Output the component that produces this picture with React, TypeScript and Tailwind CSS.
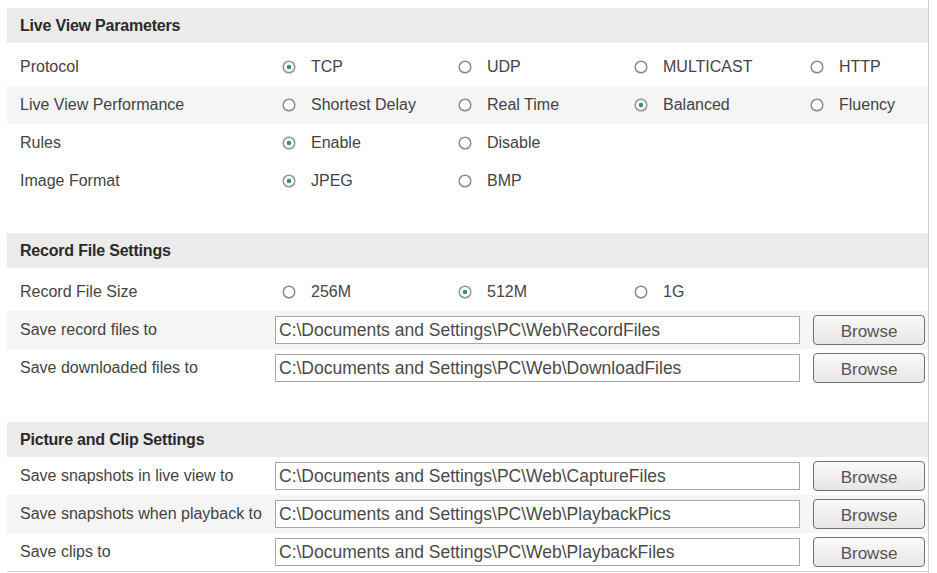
import React from 'react';

type Opt = { label: string; checked?: boolean };

function Radio({ checked }: { checked?: boolean }) {
  return (
    <svg width="14" height="14" viewBox="0 0 14 14" className="shrink-0">
      <circle cx="7" cy="7" r="5.8" fill="#fff" stroke={checked ? '#8a9a92' : '#8c8c8c'} strokeWidth="1.5" />
      {checked && <circle cx="7" cy="7" r="2.3" fill="#3f8f66" />}
    </svg>
  );
}

function SectionHeader({ title }: { title: string }) {
  return (
    <div className="h-[35px] bg-[#ebebeb] flex items-center pl-[13px] text-[16px] font-bold text-[#2a2a2a] tracking-[-0.2px]">
      {title}
    </div>
  );
}

function RadioRow({ label, options, shaded }: { label: string; options: Opt[]; shaded?: boolean }) {
  return (
    <div className={`h-[38px] flex items-center ${shaded ? 'bg-[#f5f5f5]' : ''}`}>
      <div className="w-[275px] shrink-0 pl-[13px] text-[16px] text-[#444]">{label}</div>
      {options.map((o) => (
        <div key={o.label} className="w-[176px] shrink-0 flex items-center gap-[15px]">
          <Radio checked={o.checked} />
          <span className="text-[16px] text-[#444] whitespace-nowrap">{o.label}</span>
        </div>
      ))}
    </div>
  );
}

function PathRow({ label, value, shaded }: { label: string; value: string; shaded?: boolean }) {
  return (
    <div className={`h-[38px] flex items-center ${shaded ? 'bg-[#f5f5f5]' : ''}`}>
      <div className="w-[268px] shrink-0 pl-[13px] text-[16px] text-[#444] whitespace-nowrap">{label}</div>
      <div className="w-[525px] shrink-0 h-[28px] border border-[#a8a8a8] bg-white flex items-center pl-[3px] text-[17.5px] text-[#4a4a4a] whitespace-nowrap overflow-hidden">
        {value}
      </div>
      <button className="ml-[13px] shrink-0 w-[112px] h-[30px] rounded-[4px] border-[1.5px] border-[#707070] bg-gradient-to-b from-[#fafafa] to-[#e6e6e6] text-[17px] text-[#555] pt-[3px]">
        Browse
      </button>
    </div>
  );
}

export default function App() {
  return (
    <div className="w-[937px] h-[573px] bg-white overflow-hidden font-['Liberation_Sans',Arial,sans-serif]">
      <div className="ml-[7px] w-[922px] h-full border-r border-[#cfcfcf] pt-[8px]">
        <SectionHeader title="Live View Parameters" />
        <div className="mt-[5px]">
          <RadioRow
            label="Protocol"
            options={[{ label: 'TCP', checked: true }, { label: 'UDP' }, { label: 'MULTICAST' }, { label: 'HTTP' }]}
          />
          <RadioRow
            label="Live View Performance"
            shaded
            options={[{ label: 'Shortest Delay' }, { label: 'Real Time' }, { label: 'Balanced', checked: true }, { label: 'Fluency' }]}
          />
          <RadioRow label="Rules" options={[{ label: 'Enable', checked: true }, { label: 'Disable' }]} />
          <RadioRow label="Image Format" options={[{ label: 'JPEG', checked: true }, { label: 'BMP' }]} />
        </div>

        <div className="mt-[33px]">
          <SectionHeader title="Record File Settings" />
          <div className="mt-[5px]">
            <RadioRow
              label="Record File Size"
              options={[{ label: '256M' }, { label: '512M', checked: true }, { label: '1G' }]}
            />
            <PathRow label="Save record files to" value="C:\Documents and Settings\PC\Web\RecordFiles" shaded />
            <PathRow label="Save downloaded files to" value="C:\Documents and Settings\PC\Web\DownloadFiles" />
          </div>
        </div>

        <div className="mt-[35px]">
          <SectionHeader title="Picture and Clip Settings" />
          <div className="border-b border-[#d8d8d8]">
            <PathRow label="Save snapshots in live view to" value="C:\Documents and Settings\PC\Web\CaptureFiles" />
            <PathRow
              label="Save snapshots when playback to"
              value="C:\Documents and Settings\PC\Web\PlaybackPics"
              shaded
            />
            <PathRow label="Save clips to" value="C:\Documents and Settings\PC\Web\PlaybackFiles" />
          </div>
        </div>
      </div>
    </div>
  );
}
